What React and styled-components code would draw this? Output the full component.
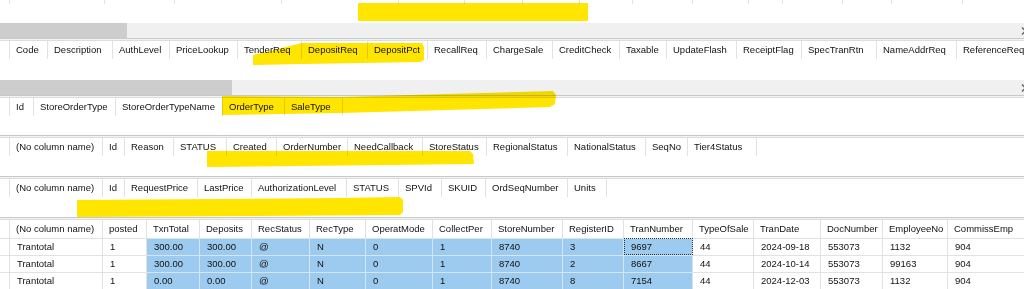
import React from 'react';
import styled, { createGlobalStyle } from 'styled-components';

const GlobalStyle = createGlobalStyle`
  html, body {
    margin: 0;
    padding: 0;
    background: #fff;
    overflow: hidden;
  }
  body {
    font-family: "Liberation Sans", Arial, sans-serif;
    font-size: 9.5px;
    color: #111;
  }
`;

// column widths are read off the grid dividers of the screenshot
const fragmentCols = [95, 70, 107, 117, 66, 58, 57, 53, 60, 56, 34, 60, 49, 71, 80];

const grids = [
  {
    h: 54,
    scroll: 232,
    cols: [
      ['Code', 38], ['Description', 65], ['AuthLevel', 57], ['PriceLookup', 68],
      ['TenderReq', 64], ['DepositReq', 66], ['DepositPct', 60], ['RecallReq', 59],
      ['ChargeSale', 66], ['CreditCheck', 67], ['Taxable', 47], ['UpdateFlash', 70],
      ['ReceiptFlag', 65], ['SpecTranRtn', 75], ['NameAddrReq', 80], ['ReferenceReq', 100],
    ],
  },
  {
    h: 37,
    cols: [
      ['Id', 24], ['StoreOrderType', 82], ['StoreOrderTypeName', 107], ['OrderType', 62], ['SaleType', 58],
    ],
  },
  {
    h: 38,
    cols: [
      ['(No column name)', 93], ['Id', 22], ['Reason', 49], ['STATUS', 53], ['Created', 50],
      ['OrderNumber', 71], ['NeedCallback', 75], ['StoreStatus', 64], ['RegionalStatus', 81],
      ['NationalStatus', 78], ['SeqNo', 42], ['Tier4Status', 69],
    ],
  },
  {
    h: 38,
    cols: [
      ['(No column name)', 93], ['Id', 22], ['RequestPrice', 73], ['LastPrice', 54],
      ['AuthorizationLevel', 95], ['STATUS', 52], ['SPVId', 43], ['SKUID', 44],
      ['OrdSeqNumber', 82], ['Units', 39],
    ],
  },
];

const resultCols = [
  ['(No column name)', 93], ['posted', 44], ['TxnTotal', 53], ['Deposits', 52], ['RecStatus', 58],
  ['RecType', 56], ['OperatMode', 67], ['CollectPer', 59], ['StoreNumber', 71], ['RegisterID', 61],
  ['TranNumber', 69], ['TypeOfSale', 61], ['TranDate', 67], ['DocNumber', 62], ['EmployeeNo', 65],
  ['CommissEmp', 80],
];

const resultRows = [
  ['Trantotal', '1', '300.00', '300.00', '@', 'N', '0', '1', '8740', '3', '9697', '44', '2024-09-18', '553073', '1132', '904'],
  ['Trantotal', '1', '300.00', '300.00', '@', 'N', '0', '1', '8740', '2', '8667', '44', '2024-10-14', '553073', '99163', '904'],
  ['Trantotal', '1', '0.00', '0.00', '@', 'N', '0', '1', '8740', '8', '7154', '44', '2024-12-03', '553073', '1132', '904'],
];

const isSelected = (i) => i >= 2 && i <= 10;

const App = () => {
  return (
    <>
      <GlobalStyle />
      <Page>
        <Pane $h={38}>
          <Body>
            <Row>
              <FragCell $w={10} />
              {fragmentCols.map((w, i) => <FragCell key={i} $w={w} />)}
            </Row>
          </Body>
          <ScrollBar thumb={127} />
        </Pane>

        {grids.map((g, gi) => (
          <React.Fragment key={gi}>
            <Splitter />
            <Pane $h={g.h}>
              <Body>
                <Row>
                  <HeadCell $w={10} />
                  {g.cols.map(([name, w]) => (
                    <HeadCell key={name} $w={w}>{name}</HeadCell>
                  ))}
                </Row>
              </Body>
              {g.scroll && <ScrollBar thumb={g.scroll} />}
            </Pane>
          </React.Fragment>
        ))}

        <Splitter />
        <Pane $h={80}>
          <Row>
            <HeadCell $w={10} />
            {resultCols.map(([name, w]) => (
              <HeadCell key={name} $w={w}>{name}</HeadCell>
            ))}
          </Row>
          {resultRows.map((r, ri) => (
            <Row key={ri}>
              <DataCell $w={10} />
              {r.map((v, ci) => (
                <DataCell
                  key={ci}
                  $w={resultCols[ci][1]}
                  $sel={isSelected(ci)}
                  $focus={ri === 0 && ci === 10}
                >
                  {v}
                </DataCell>
              ))}
            </Row>
          ))}
        </Pane>

        <Marks viewBox="0 0 1024 289" width="1024" height="289">
          <rect x="358" y="3" width="230" height="18" rx="1" />
          <polygon points="253,55 302,43 422,43 424,47 424,60 420,62 302,64 253,65" />
          <polygon points="222,96 340,97 553,91 556,95 555,104 550,107 340,113 222,115" />
          <polygon points="207,151 470,151 473,154 474,164 207,167" />
          <polygon points="77,200 340,198 400,197 403,200 403,212 400,215 77,217" />
        </Marks>
      </Page>
    </>
  );
};

const ScrollBar = ({ thumb }) => (
  <Bar>
    <Thumb $w={thumb} />
    <Track />
    <Arrow>
      <svg width="6" height="8" viewBox="0 0 6 8">
        <path d="M1 0.5 L4.5 4 L1 7.5" fill="none" stroke="#606060" strokeWidth="1.3" />
      </svg>
    </Arrow>
  </Bar>
);

export default App;

const Page = styled.div`
  position: relative;
  width: 1032px;
  height: 289px;
  display: flex;
  flex-direction: column;
  background: #fff;
`;

const Pane = styled.div`
  height: ${p => p.$h}px;
  flex-shrink: 0;
  display: flex;
  flex-direction: column;
  overflow: hidden;
`;

const Body = styled.div`
  flex: 1;
`;

const Splitter = styled.div`
  height: 3px;
  flex-shrink: 0;
  box-sizing: border-box;
  border-top: 1px solid #c9c9c9;
  border-bottom: 1px solid #dddddd;
  background: #f3f3f3;
`;

const Row = styled.div`
  display: flex;
`;

const FragCell = styled.div`
  width: ${p => p.$w}px;
  height: 4px;
  flex-shrink: 0;
  box-sizing: border-box;
  border-right: 1px solid #e2e2e2;
`;

const HeadCell = styled.div`
  width: ${p => p.$w}px;
  height: 18px;
  line-height: 18px;
  flex-shrink: 0;
  box-sizing: border-box;
  padding-left: 6px;
  border-right: 1px solid #e2e2e2;
  white-space: nowrap;
  overflow: hidden;
  color: #111;
`;

const DataCell = styled.div`
  width: ${p => p.$w}px;
  height: 17px;
  line-height: 16px;
  flex-shrink: 0;
  box-sizing: border-box;
  padding-left: 7px;
  border-top: 1px solid ${p => (p.$sel ? '#d3e6f7' : '#e2e2e2')};
  border-right: 1px solid ${p => (p.$sel ? '#d3e6f7' : '#e2e2e2')};
  background: ${p => (p.$sel ? '#9dcaef' : 'transparent')};
  outline: ${p => (p.$focus ? '1px dotted #333' : 'none')};
  outline-offset: -1px;
  white-space: nowrap;
  overflow: hidden;
  color: #111;
`;

const Bar = styled.div`
  height: 15px;
  flex-shrink: 0;
  display: flex;
  background: #f0f0f0;
`;

const Thumb = styled.div`
  width: ${p => p.$w}px;
  background: #cdcdcd;
`;

const Track = styled.div`
  flex: 1;
`;

const Arrow = styled.div`
  width: 17px;
  display: flex;
  align-items: center;
  justify-content: center;
`;

const Marks = styled.svg`
  position: absolute;
  left: 0;
  top: 0;
  pointer-events: none;
  mix-blend-mode: multiply;
  fill: #ffe500;
`;
